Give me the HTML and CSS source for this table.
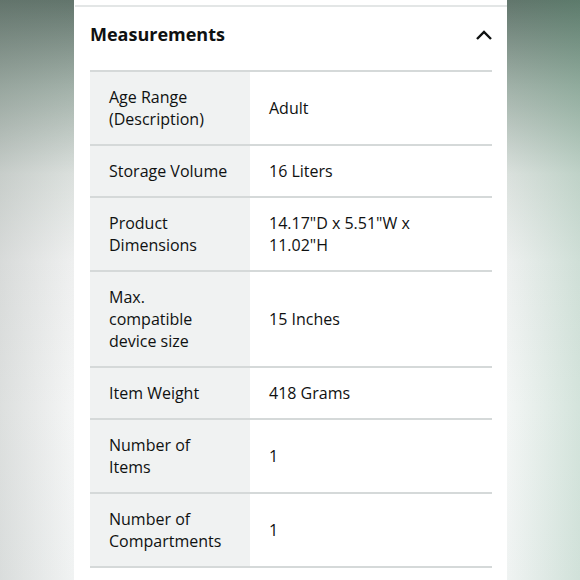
FILE: index.html
```html
<!DOCTYPE html>
<html>
<head>
<meta charset="utf-8">
<link rel="stylesheet" href="styles.css">
</head>
<body>
<div class="card">
  <div class="divider"></div>
  <div class="head">
    <h2 class="title">Measurements</h2>
    <svg class="chev" width="18" height="12" viewBox="0 0 18 12"><polyline points="2,10 9,3 16,10" fill="none" stroke="#0f1111" stroke-width="2.4"/></svg>
  </div>
  <table class="specs">
    <tr><th>Age Range (Description)</th><td>Adult</td></tr>
    <tr><th>Storage Volume</th><td>16 Liters</td></tr>
    <tr><th>Product Dimensions</th><td>14.17"D x 5.51"W x 11.02"H</td></tr>
    <tr><th>Max. compatible device size</th><td>15 Inches</td></tr>
    <tr><th>Item Weight</th><td>418 Grams</td></tr>
    <tr><th>Number of Items</th><td>1</td></tr>
    <tr><th>Number of Compartments</th><td>1</td></tr>
  </table>
</div>
</body>
</html>
```
FILE: styles.css
```css
html, body {
  margin: 0;
  padding: 0;
  height: 580px;
  overflow: hidden;
}
body {
  background:
    linear-gradient(180deg, rgba(0,0,0,0) 0%, rgba(0,0,0,0) 100%),
    linear-gradient(90deg, rgba(100,110,105,0.18) 0%, rgba(0,0,0,0) 14%, rgba(0,0,0,0) 86%, rgba(70,145,105,0.2) 100%),
    linear-gradient(180deg, #62756c 0%, #a3b2aa 15%, #dde2df 30%, #f1f2f2 45%, #f7f8f8 70%, #f3f5f5 100%);
  font-family: "Open Sans", "Noto Sans", sans-serif;
  color: #0f1111;
}
.card {
  margin-left: 74px;
  width: 433px;
  height: 580px;
  background: #fff;
  padding-top: 5px;
  box-sizing: border-box;
}
.divider {
  height: 2px;
  background: #e3e6e6;
  margin-left: 1px;
}
.head {
  display: flex;
  align-items: center;
  justify-content: space-between;
  height: 54px;
  padding: 0 15px 0 16px;
  margin-bottom: 9px;
}
.title {
  margin: 0;
  font-size: 18px;
  font-weight: 700;
}
.chev {
  margin-right: -1px;
  margin-top: 2px;
}
.specs {
  margin-left: 16px;
  width: 402px;
  border-collapse: collapse;
  font-size: 16px;
  line-height: 22px;
}
.specs tr {
  border-top: 2px solid #d5d9d9;
}
.specs tr:last-child {
  border-bottom: 2px solid #d5d9d9;
}
.specs th, .specs td {
  padding: 14px 19px;
  text-align: left;
  font-weight: 400;
  vertical-align: middle;
}
.specs td {
  padding-right: 40px;
}
.specs th {
  width: 122px;
  background: #f0f2f2;
}
```
